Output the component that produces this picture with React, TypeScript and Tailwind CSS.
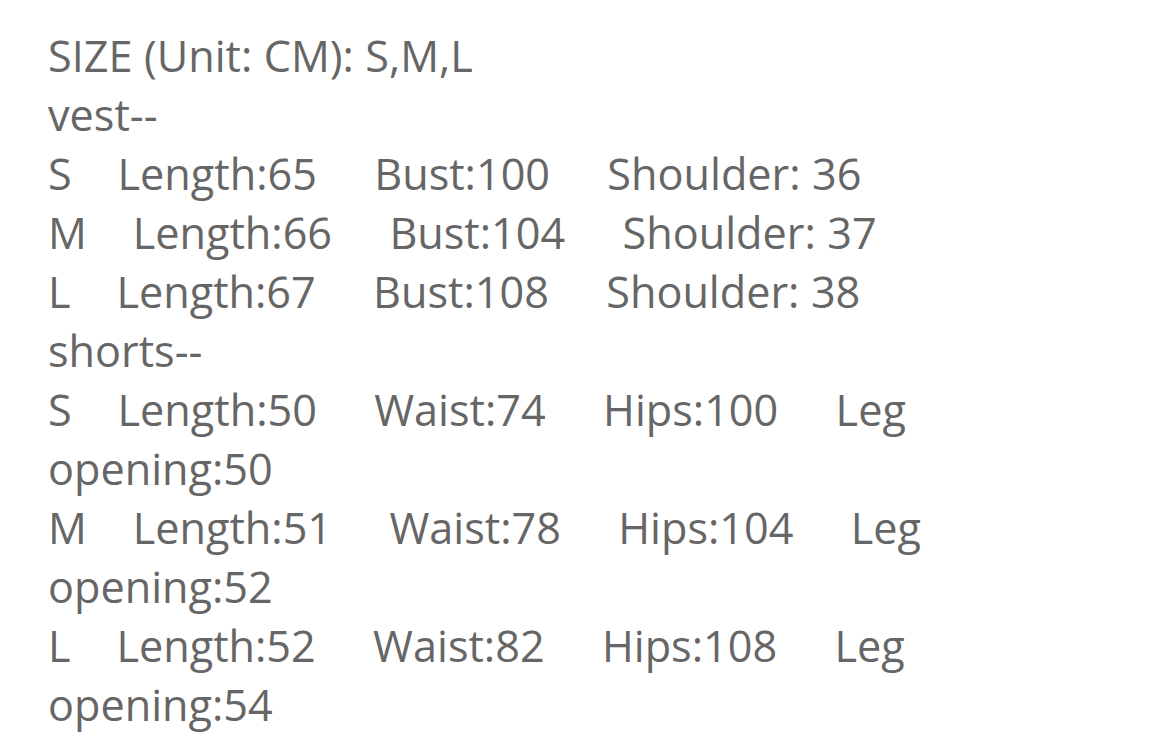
export default function App() {
  const lines = [
    'SIZE (Unit: CM): S,M,L',
    'vest--',
    'S    Length:65     Bust:100     Shoulder: 36',
    'M    Length:66     Bust:104     Shoulder: 37',
    'L    Length:67     Bust:108     Shoulder: 38',
    'shorts--',
    'S    Length:50     Waist:74     Hips:100     Leg opening:50',
    'M    Length:51     Waist:78     Hips:104     Leg opening:52',
    'L    Length:52     Waist:82     Hips:108     Leg opening:54',
  ];
  return (
    <div className="min-h-screen bg-white px-[48px] pt-[26px]">
      <div
        className="w-[1000px] whitespace-pre-wrap text-[43.2px] leading-[59px] [word-spacing:0.25px] text-[#666666]"
        style={{ fontFamily: '"Open Sans", sans-serif' }}
      >
        {lines.map((l, i) => (
          <div key={i}>{l}</div>
        ))}
      </div>
    </div>
  );
}
